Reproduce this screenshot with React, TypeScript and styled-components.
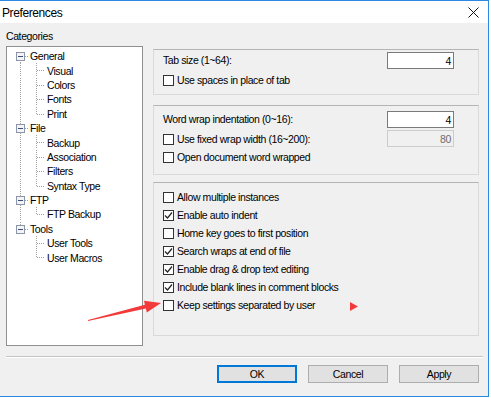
import React from "react";
import styled, { createGlobalStyle } from "styled-components";

const UI = `"Liberation Sans", Arial, sans-serif`;

const Global = createGlobalStyle`
  html, body { margin: 0; padding: 0; background: #ffffff; }
  body { font-family: ${UI}; font-size: 10.5px; letter-spacing: -0.4px; color: #000; }
`;

const Window = styled.div`
  position: relative;
  width: 488px;
  height: 395px;
  border-top: 1px solid #2b8ae0;
  border-right: 1px solid #2b8ae0;
  border-bottom: 1px solid #2b8ae0;
  display: flex;
  flex-direction: column;
  background: #f0f0f0;
`;

const TitleBar = styled.div`
  height: 22px;
  background: #ffffff;
  display: flex;
  align-items: center;
  justify-content: space-between;
  padding: 1px 9px 0 2px;
  box-sizing: border-box;
  font-size: 12px;
  letter-spacing: -0.4px;
`;

const CloseIcon = styled.svg`
  width: 11px;
  height: 11px;
`;

const Body = styled.div`
  flex: 1;
  display: flex;
  flex-direction: column;
  padding: 6px 0 0 6px;
`;

const Main = styled.div`
  display: flex;
  gap: 10px;
  height: 317px;
`;

const LeftCol = styled.div`
  width: 137px;
  display: flex;
  flex-direction: column;
`;

const Caption = styled.div`
  height: 14px;
  line-height: 15px;
  margin-bottom: 3px;
`;

const TreeBox = styled.div`
  height: 297px;
  background: #ffffff;
  border: 1px solid #8e8f8f;
  padding-top: 2px;
`;

const TreeRow = styled.div`
  height: 14.4px;
  display: flex;
  align-items: center;
  white-space: nowrap;
`;

const TreeLabel = styled.span`
  padding-left: 1px;
  line-height: 14px;
`;

const Gutter = styled.svg<{ $w: number }>`
  width: ${(p) => p.$w}px;
  height: 14.4px;
  flex: none;
`;

const RightCol = styled.div`
  width: 326px;
  display: flex;
  flex-direction: column;
  padding-top: 20px;
`;

const Group = styled.div<{ $h: number; $pt: number; $mt: number }>`
  height: ${(p) => p.$h}px;
  box-sizing: border-box;
  margin-top: ${(p) => p.$mt}px;
  border: 1px solid #d9d9d9;
  border-top-color: #b4b4b4;
  padding: ${(p) => p.$pt}px 24px 0 9px;
  display: flex;
  flex-direction: column;
`;

const FieldRow = styled.div<{ $mt?: number }>`
  height: 17px;
  margin-top: ${(p) => p.$mt ?? 0}px;
  display: flex;
  align-items: center;
  justify-content: space-between;
  line-height: 19px;
`;

const NumInput = styled.div<{ $disabled?: boolean }>`
  width: 63px;
  height: 15px;
  border: 1px solid ${(p) => (p.$disabled ? "#cccccc" : "#7a7a7a")};
  background: ${(p) => (p.$disabled ? "#f0f0f0" : "#ffffff")};
  color: ${(p) => (p.$disabled ? "#6d6d6d" : "#000")};
  text-align: right;
  line-height: 16px;
  padding-right: 2px;
  box-sizing: content-box;
  flex: none;
`;

const CheckRow = styled.div<{ $mt?: number }>`
  height: 18px;
  margin-top: ${(p) => p.$mt ?? 0}px;
  display: flex;
  align-items: center;
  gap: 3px;
  white-space: nowrap;
`;

const CheckText = styled.span`
  line-height: 20px;
`;

const Box = styled.span`
  width: 9px;
  height: 9px;
  margin-top: 1px;
  border: 1px solid #333333;
  background: #ffffff;
  display: inline-flex;
  flex: none;
`;

const Separator = styled.div`
  width: 477px;
  height: 0;
  margin-top: 10px;
  border-top: 1px solid #c4c4c4;
  border-bottom: 1px solid #ffffff;
`;

const ButtonRow = styled.div`
  display: flex;
  justify-content: flex-end;
  gap: 11px;
  padding-right: 9px;
  margin-top: 7px;
`;

const Button = styled.div<{ $default?: boolean }>`
  width: 78px;
  height: 16px;
  border: 1px solid ${(p) => (p.$default ? "#0078d7" : "#adadad")};
  box-shadow: ${(p) => (p.$default ? "inset 0 0 0 1px #0078d7" : "none")};
  background: #e1e1e1;
  display: flex;
  align-items: center;
  justify-content: center;
`;

const Overlay = styled.svg`
  position: absolute;
  left: 0;
  top: -1px;
  width: 491px;
  height: 398px;
  pointer-events: none;
`;

const Check = ({ checked }: { checked?: boolean }) => (
  <Box>
    {checked && (
      <svg width="9" height="9" viewBox="0 0 9 9">
        <path d="M1 4.5 L3.5 7 L8 1.5" fill="none" stroke="#222" strokeWidth="1.2" />
      </svg>
    )}
  </Box>
);

const H = 14.4;
const CY = 7.5;
const DOT = "#a0a0a0";

const TopGutter = ({ first, last }: { first: boolean; last: boolean }) => (
  <Gutter $w={22} viewBox={`0 0 22 ${H}`} shapeRendering="crispEdges">
    <line x1="13.5" y1={first ? CY : 0} x2="13.5" y2={last ? CY : H} stroke={DOT} strokeDasharray="1 1" />
    <line x1="18" y1={CY} x2="22" y2={CY} stroke={DOT} strokeDasharray="1 1" />
    <rect x="9.5" y={CY - 4} width="8" height="8" fill="#f4f4f4" stroke="#8c96a8" />
    <line x1="11.5" y1={CY} x2="16" y2={CY} stroke="#3c4f7a" />
  </Gutter>
);

const ChildGutter = ({ parentLast, last }: { parentLast: boolean; last: boolean }) => (
  <Gutter $w={39} viewBox={`0 0 39 ${H}`} shapeRendering="crispEdges">
    {!parentLast && <line x1="13.5" y1="0" x2="13.5" y2={H} stroke={DOT} strokeDasharray="1 1" />}
    <line x1="29.5" y1="0" x2="29.5" y2={last ? CY : H} stroke={DOT} strokeDasharray="1 1" />
    <line x1="30" y1={CY} x2="38" y2={CY} stroke={DOT} strokeDasharray="1 1" />
  </Gutter>
);

const tree = [
  { label: "General", children: ["Visual", "Colors", "Fonts", "Print"] },
  { label: "File", children: ["Backup", "Association", "Filters", "Syntax Type"] },
  { label: "FTP", children: ["FTP Backup"] },
  { label: "Tools", children: ["User Tools", "User Macros"] },
];

const options: [string, boolean][] = [
  ["Allow multiple instances", false],
  ["Enable auto indent", true],
  ["Home key goes to first position", false],
  ["Search wraps at end of file", true],
  ["Enable drag & drop text editing", true],
  ["Include blank lines in comment blocks", true],
  ["Keep settings separated by user", false],
];

export default function App() {
  return (
    <>
      <Global />
      <Window>
        <TitleBar>
          <span>Preferences</span>
          <CloseIcon viewBox="0 0 11 11">
            <path d="M0.5 0.5 L10.5 10.5 M10.5 0.5 L0.5 10.5" stroke="#111" strokeWidth="1" />
          </CloseIcon>
        </TitleBar>
        <Body>
          <Main>
            <LeftCol>
              <Caption>Categories</Caption>
              <TreeBox>
                {tree.map((node, i) => (
                  <React.Fragment key={node.label}>
                    <TreeRow>
                      <TopGutter first={i === 0} last={i === tree.length - 1} />
                      <TreeLabel>{node.label}</TreeLabel>
                    </TreeRow>
                    {node.children.map((c, j) => (
                      <TreeRow key={c}>
                        <ChildGutter parentLast={i === tree.length - 1} last={j === node.children.length - 1} />
                        <TreeLabel>{c}</TreeLabel>
                      </TreeRow>
                    ))}
                  </React.Fragment>
                ))}
              </TreeBox>
            </LeftCol>
            <RightCol>
              <Group $h={46} $pt={2} $mt={0}>
                <FieldRow>
                  <span>Tab size (1~64):</span>
                  <NumInput>4</NumInput>
                </FieldRow>
                <CheckRow $mt={2}>
                  <Check />
                  <CheckText>Use spaces in place of tab</CheckText>
                </CheckRow>
              </Group>
              <Group $h={70} $pt={5} $mt={10}>
                <FieldRow>
                  <span>Word wrap indentation (0~16):</span>
                  <NumInput>4</NumInput>
                </FieldRow>
                <FieldRow $mt={2}>
                  <CheckRow>
                    <Check />
                    <CheckText>Use fixed wrap width (16~200):</CheckText>
                  </CheckRow>
                  <NumInput $disabled>80</NumInput>
                </FieldRow>
                <CheckRow $mt={1}>
                  <Check />
                  <CheckText>Open document word wrapped</CheckText>
                </CheckRow>
              </Group>
              <Group $h={154} $pt={5} $mt={7}>
                {options.map(([label, checked]) => (
                  <CheckRow key={label}>
                    <Check checked={checked} />
                    <CheckText>{label}</CheckText>
                  </CheckRow>
                ))}
              </Group>
            </RightCol>
          </Main>
          <Separator />
          <ButtonRow>
            <Button $default>OK</Button>
            <Button>Cancel</Button>
            <Button>Apply</Button>
          </ButtonRow>
        </Body>
        <Overlay viewBox="0 0 491 398">
          <polygon
            points="88,320 144.9,304.7 144,300.8 161,303 146.8,312.4 145.9,308.6 88,321"
            fill="#f23a3a"
          />
          <polygon points="350,302 358,306.5 350,311" fill="#f23a3a" />
        </Overlay>
      </Window>
    </>
  );
}
